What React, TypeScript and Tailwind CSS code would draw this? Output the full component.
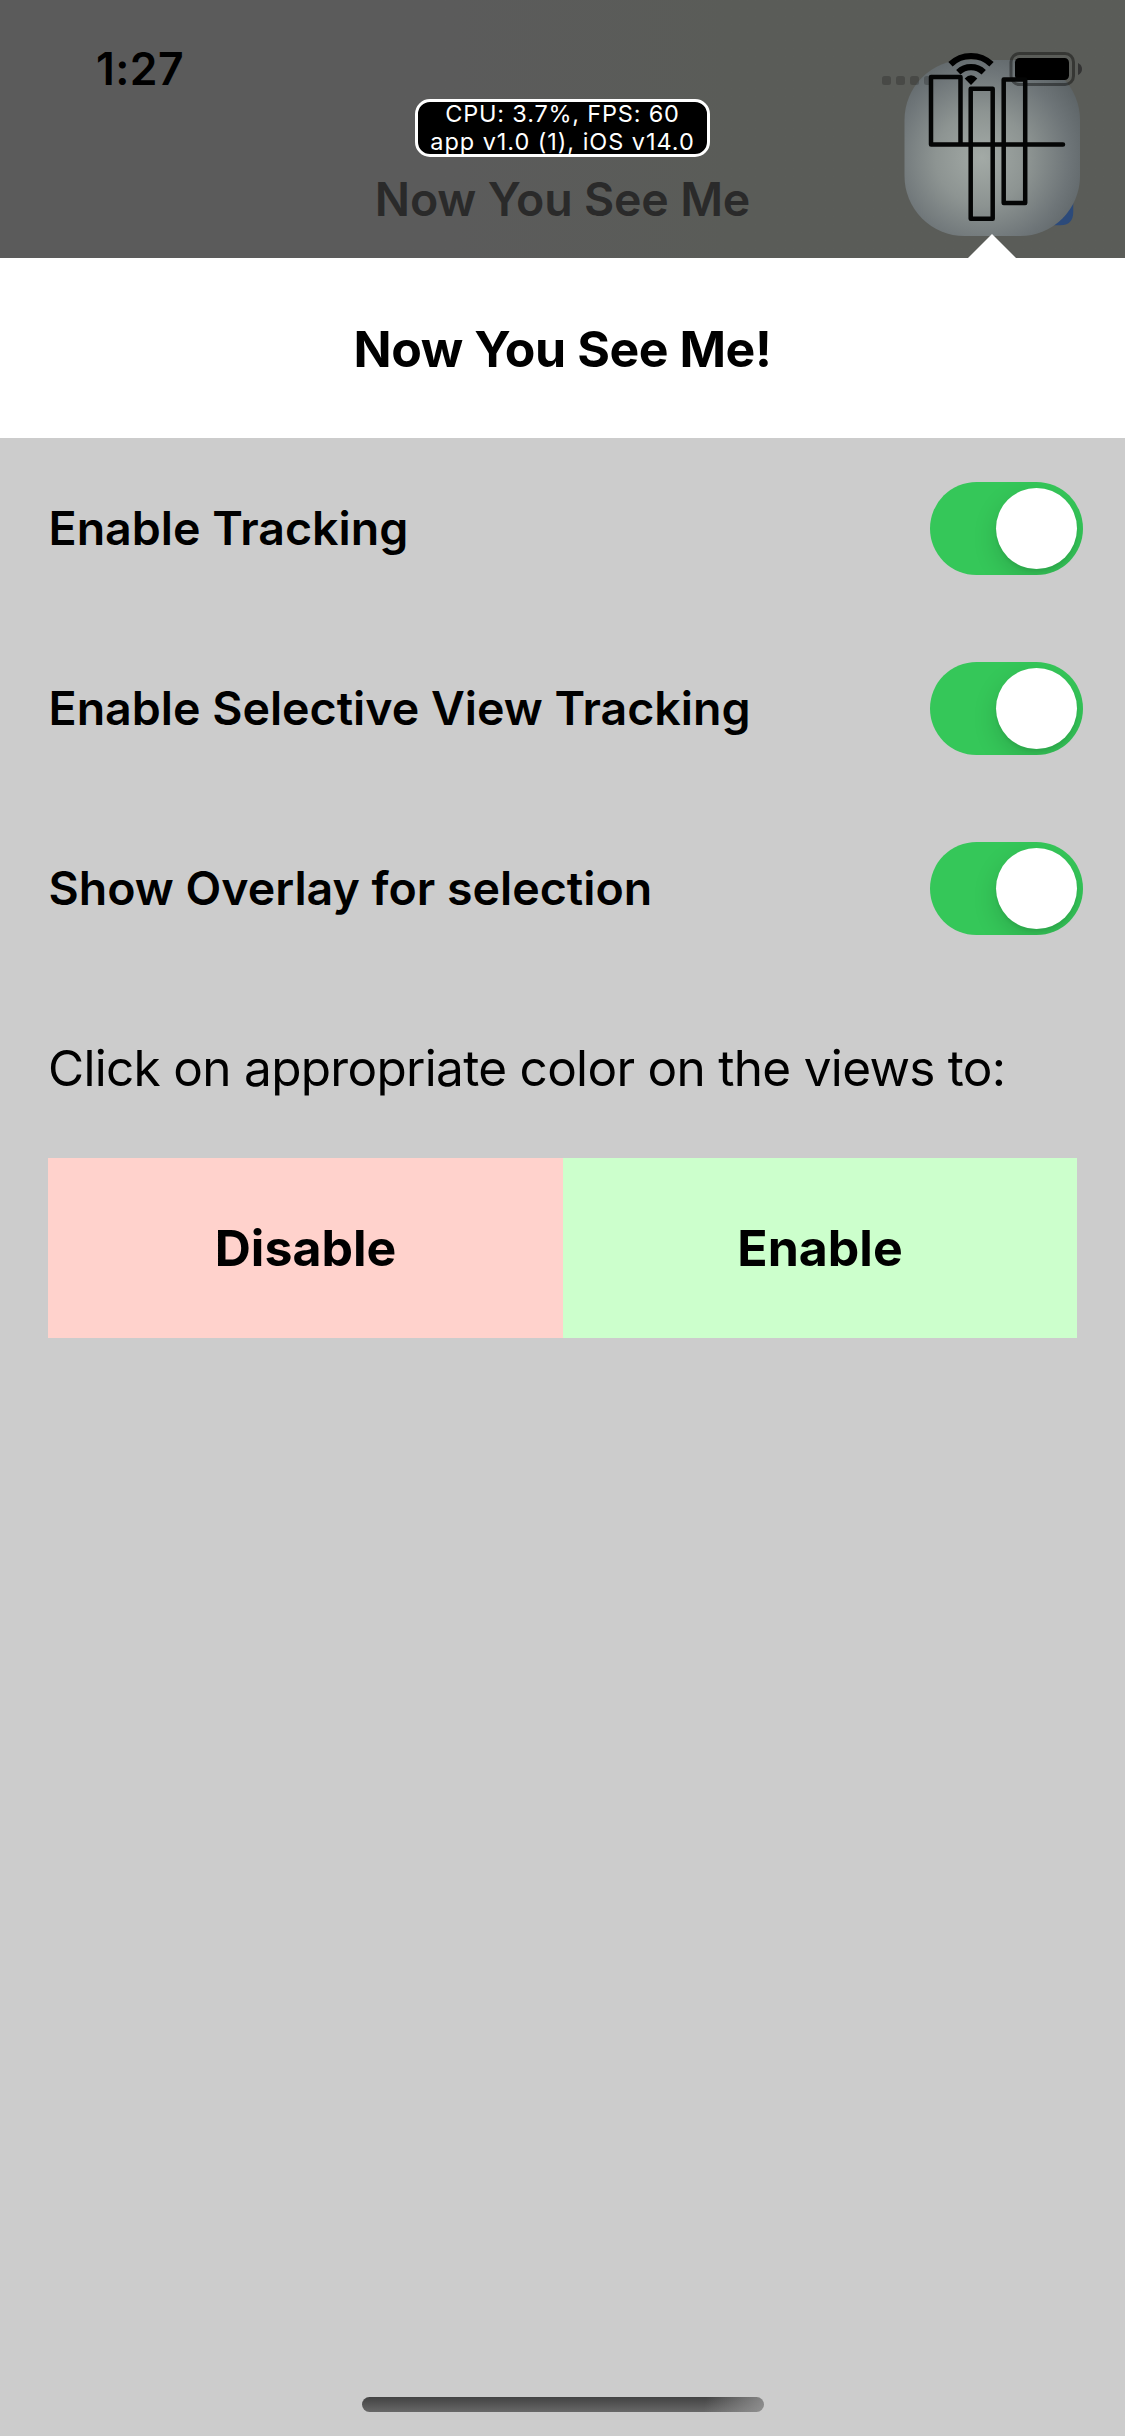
import React, { useState } from "react";

function StatusIcons() {
  return (
    <svg className="absolute top-0 right-0" width="265" height="258" viewBox="860 0 265 258">
      <defs>
        <radialGradient id="tile" gradientUnits="userSpaceOnUse" cx="982" cy="158" r="116">
          <stop offset="0" stopColor="#a3aaa6" />
          <stop offset="0.4" stopColor="#8d9492" />
          <stop offset="0.75" stopColor="#6e7578" />
          <stop offset="1" stopColor="#5b6265" />
        </radialGradient>
      </defs>
      <path d="M1069.5 198V212Q1069.5 221.500 1060 221.500H1048" fill="none" stroke="#2c4a7a" strokeWidth="7.500" />
      <rect x="904.500" y="60" width="175.500" height="176" rx="60" fill="url(#tile)" />
      <g fill="#000" fillOpacity="0.2">
        <rect x="882" y="76" width="9" height="9" rx="2.500" />
        <rect x="896" y="76" width="9" height="9" rx="2.500" />
        <rect x="910" y="76" width="9" height="9" rx="2.500" />
        <rect x="924" y="76" width="9" height="9" rx="2.500" />
      </g>
      <g fill="none" stroke="#000" strokeWidth="6.200">
        <path d="M950.5 64.300A29.500 29.500 0 0 1 991.5 64.300" />
        <path d="M958.3 72.300A18.300 18.300 0 0 1 983.7 72.300" />
      </g>
      <path d="M971 85L964.7 78.600Q971 71.800 977.3 78.600Z" fill="#000" />
      <rect x="1011" y="53.500" width="62.500" height="31" rx="8.500" fill="none" stroke="#000" strokeOpacity="0.4" strokeWidth="3" />
      <rect x="1015" y="58" width="54" height="22" rx="4.500" fill="#000" />
      <path d="M1078 63Q1082 65 1082 69T1078 75Z" fill="#333" />
      <g fill="none" stroke="#040505" strokeWidth="4.500" strokeLinejoin="round" strokeLinecap="round">
        <path d="M960.500 144.500V77H931V144.500H1063" />
        <rect x="970.700" y="88.700" width="22" height="130" />
        <rect x="1003.700" y="79.500" width="21.500" height="123.500" />
      </g>
      <path d="M992 234L1016 258H968Z" fill="#fff" />
    </svg>
  );
}

function Header() {
  return (
    <header className="relative h-[258px] bg-gradient-to-r from-[#5b5b5b] from-40% to-[#5a5c58] to-65% flex flex-col items-center">
      <div className="w-full h-[99px] pl-[96px] pt-[42px]">
        <div className="text-[44.5px] leading-[54px] font-semibold tracking-[0.4px]">1:27</div>
      </div>
      <div className="w-[295px] h-[58px] rounded-[15px] border-[3px] border-white bg-black text-white text-[23.5px] leading-[28px] text-center whitespace-nowrap overflow-hidden">
        <div className="-mt-[2px] tracking-[0.8px]">CPU: 3.7%, FPS: 60</div>
        <div className="tracking-[0.95px]">app v1.0 (1), iOS v14.0</div>
      </div>
      <div className="mt-[13px] text-[46.5px] leading-[58px] font-semibold tracking-[-0.2px] text-[#2a2a2a] whitespace-nowrap">Now You See Me</div>
      <StatusIcons />
    </header>
  );
}

function ToggleRow({ label }: { label: string }) {
  const [on, setOn] = useState(true);
  return (
    <div className="h-[180px] pl-[48.5px] pr-[42px] flex items-center justify-between">
      <span className="text-[46.5px] leading-[56px] font-semibold whitespace-nowrap">{label}</span>
      <button
        role="switch"
        aria-checked={on}
        aria-label={label}
        onClick={() => setOn(!on)}
        className={"w-[153px] h-[93px] rounded-full p-[6px] flex overflow-hidden " + (on ? "bg-[#35c759] justify-end" : "bg-[#e9e9ea] justify-start")}
      >
        <span className="size-[81px] rounded-full bg-white shadow-[0_9px_24px_rgba(0,0,0,0.15),0_3px_3px_rgba(0,0,0,0.06)]" />
      </button>
    </div>
  );
}

export default function App() {
  return (
    <div className="w-[1125px] h-[2436px] bg-[#ccc] text-black font-['Inter',sans-serif] flex flex-col overflow-hidden">
      <Header />
      <div className="h-[180px] bg-white flex items-center justify-center">
        <h1 className="mt-[1px] text-[50px] leading-[60px] font-bold tracking-[-0.45px] whitespace-nowrap">Now You See Me!</h1>
      </div>
      <ToggleRow label="Enable Tracking" />
      <ToggleRow label="Enable Selective View Tracking" />
      <ToggleRow label="Show Overlay for selection" />
      <div className="h-[180px] pl-[48px] flex items-center text-[49.5px] tracking-[-0.7px] whitespace-nowrap">
        <span>Click on appropriate color on the views to:</span>
      </div>
      <div className="mx-[48px] h-[180px] grid grid-cols-[515px_514px] text-[50px] font-bold">
        <button className="bg-[#ffd2cc]">Disable</button>
        <button className="bg-[#ccffcc]">Enable</button>
      </div>
      <div className="mt-auto mb-[24px] ml-[362px] w-[402px] h-[15px] rounded-full bg-[linear-gradient(100deg,transparent_85%,#9a9a9acc_100%),linear-gradient(#424242,#686868)]" />
    </div>
  );
}
